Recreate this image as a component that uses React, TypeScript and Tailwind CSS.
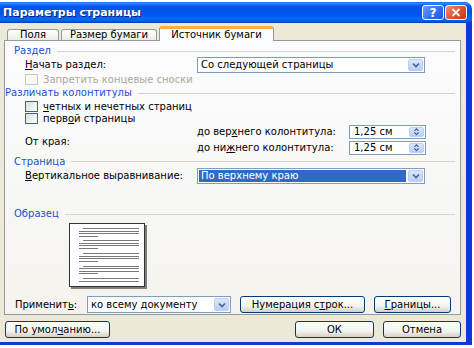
import React from "react";

const U = ({ children }: { children: React.ReactNode }) => (
  <span className="underline underline-offset-[1px]">{children}</span>
);

const ComboArrow = () => (
  <div className="w-[15px] h-full rounded-[2px] border border-[#bccdf5] bg-[linear-gradient(to_bottom,#dbe6fe,#b9cdfb)] flex items-center justify-center">
    <svg width="8" height="6" viewBox="0 0 8 6">
      <path d="M1 1.5 L4 4.5 L7 1.5" stroke="#4d6185" strokeWidth="1.6" fill="none" />
    </svg>
  </div>
);

const Spin = () => (
  <div className="w-[15px] h-full rounded-[2px] border border-[#bccdf5] bg-[linear-gradient(to_bottom,#dbe6fe,#b9cdfb)] flex flex-col items-center justify-center gap-[1px]">
    <svg width="7" height="4" viewBox="0 0 7 4">
      <path d="M1 3.5 L3.5 1 L6 3.5" stroke="#4d6185" strokeWidth="1.3" fill="none" />
    </svg>
    <svg width="7" height="4" viewBox="0 0 7 4">
      <path d="M1 0.5 L3.5 3 L6 0.5" stroke="#4d6185" strokeWidth="1.3" fill="none" />
    </svg>
  </div>
);

const Combo = ({
  text,
  w,
  h,
  selected,
}: {
  text: string;
  w: string;
  h: string;
  selected?: boolean;
}) => (
  <div className={`${w} ${h} border border-[#7f9db9] bg-white flex items-stretch p-[1px] gap-[2px]`}>
    <div
      className={`flex-1 flex items-center pl-[2px] whitespace-nowrap ${
        selected ? "bg-[#316ac5] text-white" : "text-black"
      }`}
    >
      {text}
    </div>
    <ComboArrow />
  </div>
);

const SpinBox = ({ text }: { text: string }) => (
  <div className="w-[77px] h-[14px] border border-[#7f9db9] bg-white flex items-stretch p-[1px]">
    <div className="flex-1 flex items-center pl-[3px]">{text}</div>
    <Spin />
  </div>
);

const Check = ({ disabled }: { disabled?: boolean }) => (
  <div
    className={`w-[13px] h-[11px] border ${
      disabled ? "border-[#c9c7ba] bg-[#f6f6f2]" : "border-[#3a6791] bg-[linear-gradient(135deg,#dcdcd7,#ffffff)]"
    }`}
  />
);

const Header = ({ children, pl }: { children: React.ReactNode; pl: string }) => (
  <div className={`flex items-center ${pl} pr-[5px]`}>
    <span className="text-[#1c4fd6] whitespace-nowrap">{children}</span>
    <div className="flex-1 ml-[6px] h-px bg-[#d6d3c6]" />
  </div>
);

const Btn = ({ children, w }: { children: React.ReactNode; w: string }) => (
  <div
    className={`${w} h-[17px] rounded-[3px] border border-[#003c74] bg-[linear-gradient(to_bottom,#ffffff,#f3f3ef_60%,#d6d0c5)] flex items-center justify-center whitespace-nowrap`}
  >
    {children}
  </div>
);

const PagePreview = () => {
  const groups = [228, 240, 253, 265.5, 278];
  const lines: React.ReactNode[] = [];
  groups.forEach((gy, gi) => {
    const y0 = gy - 223;
    const rows = gi === groups.length - 1 ? 2 : 4;
    for (let i = 0; i < rows; i++) {
      const y = Math.round(y0 + i * 2.6) + 0.5;
      let x1 = 10;
      let x2 = 70;
      if (i === 0) x1 = 14;
      if (i === 3) x2 = 29;
      lines.push(<line key={`${gi}-${i}`} x1={x1} x2={x2} y1={y} y2={y} stroke="#7a7a7a" strokeWidth="1" />);
    }
  });
  return (
    <svg width="78" height="66" viewBox="0 0 78 66">
      <rect x="2" y="2" width="76" height="64" fill="#7d7d7d" />
      <rect x="0.5" y="0.5" width="75" height="63" fill="#ffffff" stroke="#333333" />
      {lines}
    </svg>
  );
};

export default function App() {
  return (
    <div className="w-[474px] h-[348px] bg-white overflow-hidden font-['DejaVu_Sans',sans-serif] text-[10px] leading-none text-black">
      <div className="w-[472px] h-[343px] mt-[2px] flex flex-col">
        {/* Title bar */}
        <div className="h-[21px] rounded-tr-[7px] bg-[linear-gradient(to_bottom,#0058ee_0%,#3593ff_5%,#1a7fff_10%,#0262ee_16%,#0055e6_25%,#0055eb_55%,#005bf5_68%,#026afe_78%,#0062ef_88%,#0052d6_94%,#0040ab_100%)] flex items-center pl-[3px] pr-[5px]">
          <span className="text-white font-bold text-[11px] [text-shadow:1px_1px_0_#0a1f7d]">
            Параметры страницы
          </span>
          <div className="ml-auto flex gap-[1px] items-center">
            <div className="w-[22px] h-[15px] rounded-[3px] border border-white bg-[linear-gradient(135deg,#6a9cfd,#2f6cf0_60%,#1b55dc)] flex items-center justify-center text-white font-bold text-[12px]">
              ?
            </div>
            <div className="w-[22px] h-[15px] rounded-[3px] border border-white bg-[linear-gradient(135deg,#f0917a,#e1502b_55%,#c63a17)] flex items-center justify-center">
              <svg width="10" height="9" viewBox="0 0 10 9">
                <path d="M1.5 1 L8.5 8 M8.5 1 L1.5 8" stroke="white" strokeWidth="1.8" />
              </svg>
            </div>
          </div>
        </div>

        {/* Body */}
        <div className="flex-1 flex flex-col bg-[#ece9d8] border-r-[6px] border-b-[3px] border-[#0b3ad4] pl-[4px] pr-[5px]">
          {/* Tabs */}
          <div className="h-[17px] flex items-end pl-[3px] gap-[2px]">
            <div className="w-[52px] h-[11px] rounded-t-[3px] border border-b-0 border-[#919b9c] bg-[linear-gradient(to_bottom,#ffffff,#ecebe6)] flex items-center justify-center">
              Поля
            </div>
            <div className="w-[96px] h-[11px] rounded-t-[3px] border border-b-0 border-[#919b9c] bg-[linear-gradient(to_bottom,#ffffff,#ecebe6)] flex items-center justify-center">
              Размер бумаги
            </div>
            <div className="relative z-10 -mb-px w-[115px] h-[15px] rounded-t-[3px] border border-b-0 border-[#919b9c] border-t-[3px] border-t-[#f5b33c] bg-[#fcfcfe] flex items-center justify-center">
              Источник бумаги
            </div>
          </div>

          {/* Panel */}
          <div className="h-[275px] border border-[#919b9c] bg-[linear-gradient(to_bottom,#fcfcfe,#f4f3ee)] flex flex-col">
            <div className="h-[12px] mt-[4px] flex flex-col justify-center">
              <Header pl="pl-[9px]">Раздел</Header>
            </div>
            <div className="h-[16px] flex items-center pl-[20px]">
              <div className="w-[172px]">
                <U>Н</U>ачать раздел:
              </div>
              <Combo text="Со следующей страницы" w="w-[228px]" h="h-[16px]" />
            </div>
            <div className="h-[13px] flex items-center pl-[20px] gap-[5px] text-[#aca899]">
              <Check disabled />
              <span>Запретить концевые сноски</span>
            </div>
            <div className="h-[14px] flex flex-col justify-center">
              <Header pl="pl-0">Различать колонтитулы</Header>
            </div>
            <div className="h-[13px] flex items-center pl-[20px] gap-[5px]">
              <Check />
              <span>
                <U>ч</U>етных и нечетных страниц
              </span>
            </div>
            <div className="h-[11px] flex items-center pl-[20px] gap-[5px]">
              <Check />
              <span>
                перв<U>о</U>й страницы
              </span>
            </div>
            <div className="h-[31px] flex pl-[20px]">
              <div className="w-[172px] flex items-center pt-[4px]">От края:</div>
              <div className="flex flex-col gap-[1px]">
                <div className="h-[15px] flex items-center">
                  <span className="w-[152px]">
                    до вер<U>х</U>него колонтитула:
                  </span>
                  <SpinBox text="1,25 см" />
                </div>
                <div className="h-[15px] flex items-center">
                  <span className="w-[152px]">
                    до ни<U>ж</U>него колонтитула:
                  </span>
                  <SpinBox text="1,25 см" />
                </div>
              </div>
            </div>
            <div className="h-[13px] flex flex-col justify-center">
              <Header pl="pl-[9px]">Страница</Header>
            </div>
            <div className="h-[16px] flex items-center pl-[20px]">
              <div className="w-[172px]">
                <U>В</U>ертикальное выравнивание:
              </div>
              <Combo text="По верхнему краю" w="w-[228px]" h="h-[16px]" selected />
            </div>
            <div className="h-[14px] mt-[23px] flex flex-col justify-center">
              <Header pl="pl-[9px]">Образец</Header>
            </div>
            <div className="mt-[2px] pl-[64px] h-[66px]">
              <PagePreview />
            </div>
            <div className="mt-[7px] h-[17px] flex items-center pl-[10px]">
              <div className="w-[72px]">
                Применит<U>ь</U>:
              </div>
              <Combo text="ко всему документу" w="w-[144px]" h="h-[17px]" />
              <div className="ml-[9px]">
                <Btn w="w-[125px]">
                  Нумерация с<U>т</U>рок...
                </Btn>
              </div>
              <div className="ml-[9px]">
                <Btn w="w-[77px]">
                  <U>Г</U>раницы...
                </Btn>
              </div>
            </div>
          </div>

          {/* Bottom buttons */}
          <div className="flex items-center mt-[6px]">
            <div className="ml-[1px]">
              <Btn w="w-[105px]">
                По умол<U>ч</U>анию...
              </Btn>
            </div>
            <div className="ml-auto flex gap-[9px]">
              <Btn w="w-[79px]">ОК</Btn>
              <Btn w="w-[78px]">Отмена</Btn>
            </div>
          </div>
        </div>
      </div>
    </div>
  );
}
